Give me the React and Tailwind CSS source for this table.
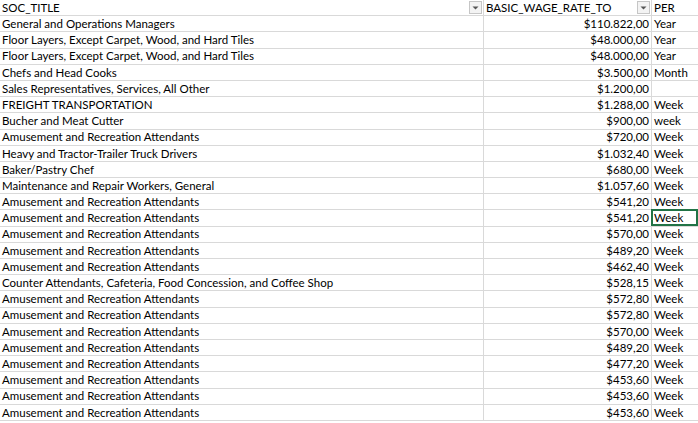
import React from "react";

const rows = [
  ["General and Operations Managers", "$110.822,00", "Year"],
  ["Floor Layers, Except Carpet, Wood, and Hard Tiles", "$48.000,00", "Year"],
  ["Floor Layers, Except Carpet, Wood, and Hard Tiles", "$48.000,00", "Year"],
  ["Chefs and Head Cooks", "$3.500,00", "Month"],
  ["Sales Representatives, Services, All Other", "$1.200,00", ""],
  ["FREIGHT TRANSPORTATION", "$1.288,00", "Week"],
  ["Bucher and Meat Cutter", "$900,00", "week"],
  ["Amusement and Recreation Attendants", "$720,00", "Week"],
  ["Heavy and Tractor-Trailer Truck Drivers", "$1.032,40", "Week"],
  ["Baker/Pastry Chef", "$680,00", "Week"],
  ["Maintenance and Repair Workers, General", "$1.057,60", "Week"],
  ["Amusement and Recreation Attendants", "$541,20", "Week"],
  ["Amusement and Recreation Attendants", "$541,20", "Week"],
  ["Amusement and Recreation Attendants", "$570,00", "Week"],
  ["Amusement and Recreation Attendants", "$489,20", "Week"],
  ["Amusement and Recreation Attendants", "$462,40", "Week"],
  ["Counter Attendants, Cafeteria, Food Concession, and Coffee Shop", "$528,15", "Week"],
  ["Amusement and Recreation Attendants", "$572,80", "Week"],
  ["Amusement and Recreation Attendants", "$572,80", "Week"],
  ["Amusement and Recreation Attendants", "$570,00", "Week"],
  ["Amusement and Recreation Attendants", "$489,20", "Week"],
  ["Amusement and Recreation Attendants", "$477,20", "Week"],
  ["Amusement and Recreation Attendants", "$453,60", "Week"],
  ["Amusement and Recreation Attendants", "$453,60", "Week"],
  ["Amusement and Recreation Attendants", "$453,60", "Week"],
];

function FilterButton() {
  return (
    <div className="w-[13px] h-[13px] border border-[#c6c6c6] bg-[#f3f3f3] flex items-center justify-center shrink-0">
      <svg width="7" height="4" viewBox="0 0 7 4">
        <path d="M0.5 0.5 L6.5 0.5 L3.5 3.5 Z" fill="#555" />
      </svg>
    </div>
  );
}

export default function App() {
  return (
    <div
      className="w-[698px] h-[423px] overflow-hidden bg-white text-black text-[11.5px] leading-none"
      style={{ fontFamily: "Lato, 'Open Sans', sans-serif" }}
    >
      <div className="grid grid-cols-[484px_168px_46px] h-[16.2px] border-b border-[#d9d9d9]">
        <div className="flex items-center justify-between pl-[2px] pr-[1px] border-r border-[#d9d9d9]">
          <span>SOC_TITLE</span>
          <FilterButton />
        </div>
        <div className="flex items-center justify-between pl-[2px] pr-[1px] border-r border-[#d9d9d9]">
          <span>BASIC_WAGE_RATE_TO</span>
          <FilterButton />
        </div>
        <div className="flex items-center pl-[2px]">
          <span>PER</span>
        </div>
      </div>
      {rows.map((r, i) => (
        <div
          key={i}
          className="grid grid-cols-[484px_168px_46px] h-[16.2px] border-b border-[#d9d9d9]"
        >
          <div className="flex items-center pl-[2px] border-r border-[#d9d9d9] whitespace-nowrap overflow-hidden">
            {r[0]}
          </div>
          <div className="flex items-center justify-end pr-[2px] border-r border-[#d9d9d9]">
            {r[1]}
          </div>
          <div
            className={
              i === 12
                ? "flex items-center pl-[1px] -mt-[1px] -ml-[1px] border-2 border-[#217346]"
                : "flex items-center pl-[2px]"
            }
          >
            {r[2]}
          </div>
        </div>
      ))}
    </div>
  );
}
